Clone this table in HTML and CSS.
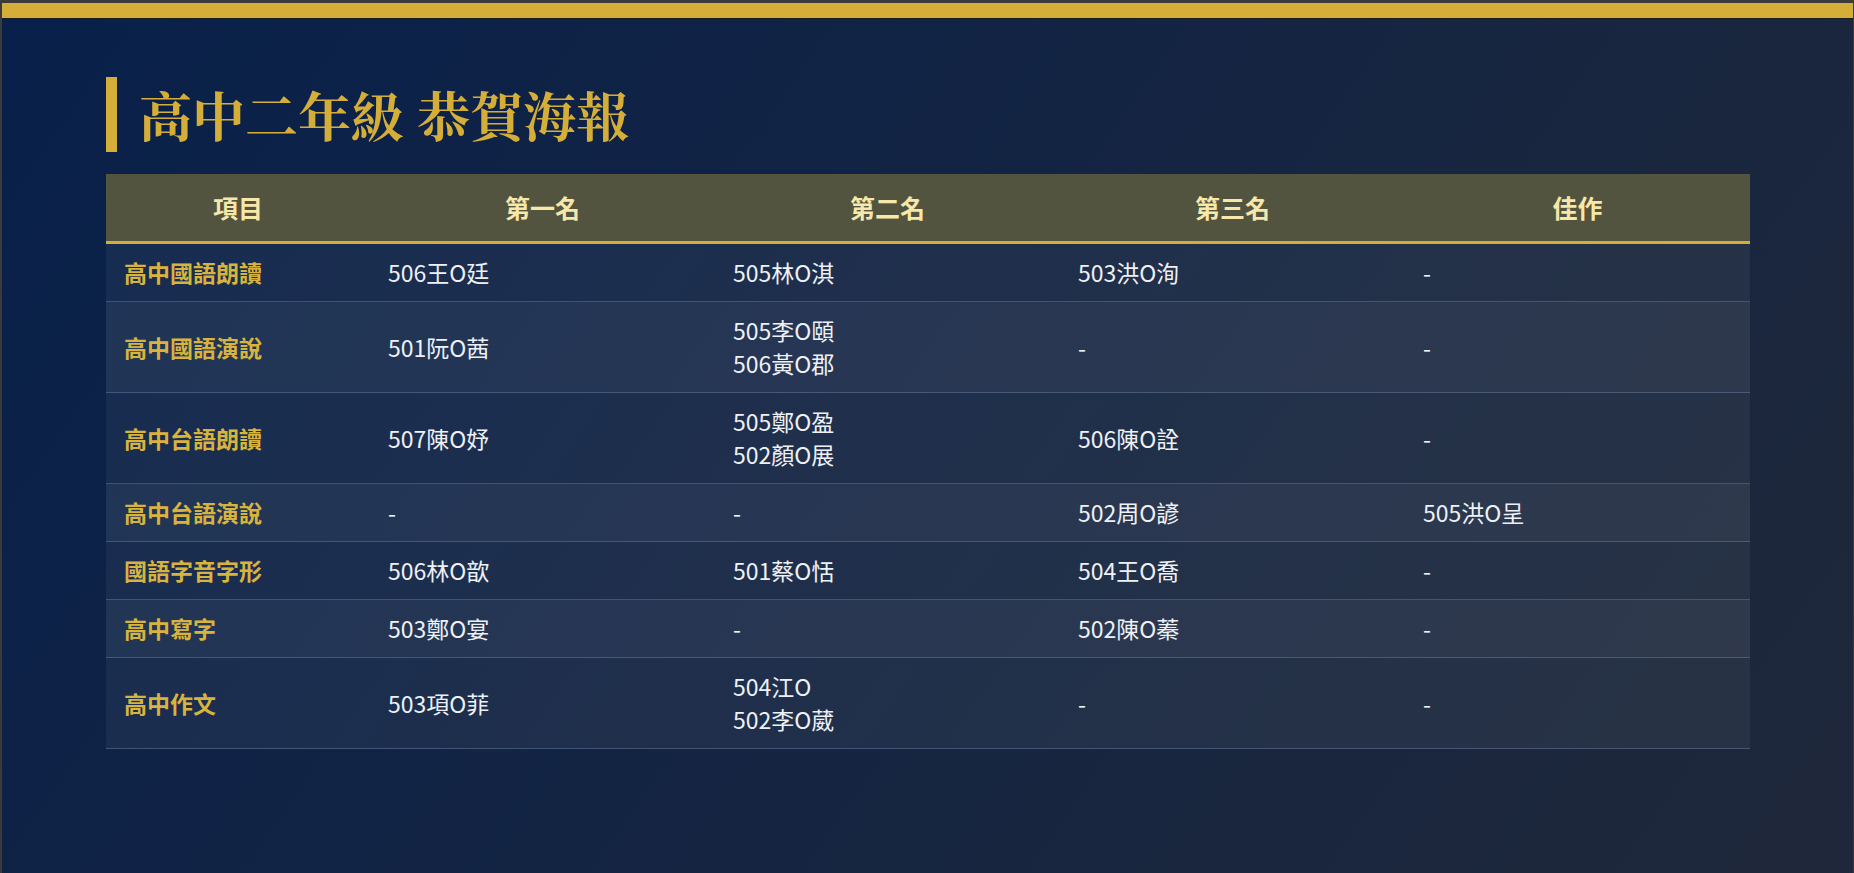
FILE: index.html
```html
<!DOCTYPE html>
<html lang="zh-Hant">
<head>
<meta charset="utf-8">
<title>高中二年級 恭賀海報</title>
<link rel="stylesheet" href="styles.css">
</head>
<body>
<div class="page">
  <div class="topbar"></div>
  <main class="content">
    <h1 class="title">高中二年級 恭賀海報</h1>
    <table class="awards">
      <colgroup>
        <col class="col-item">
        <col class="col-rank">
        <col class="col-rank">
        <col class="col-rank">
        <col class="col-rank">
      </colgroup>
      <thead>
        <tr><th>項目</th><th>第一名</th><th>第二名</th><th>第三名</th><th>佳作</th></tr>
      </thead>
      <tbody>
        <tr><td class="item">高中國語朗讀</td><td>506王O廷</td><td>505林O淇</td><td>503洪O洵</td><td>-</td></tr>
        <tr><td class="item">高中國語演說</td><td>501阮O茜</td><td>505李O頤<br>506黃O郡</td><td>-</td><td>-</td></tr>
        <tr><td class="item">高中台語朗讀</td><td>507陳O妤</td><td>505鄭O盈<br>502顏O展</td><td>506陳O詮</td><td>-</td></tr>
        <tr><td class="item">高中台語演說</td><td>-</td><td>-</td><td>502周O諺</td><td>505洪O呈</td></tr>
        <tr><td class="item">國語字音字形</td><td>506林O歆</td><td>501蔡O恬</td><td>504王O喬</td><td>-</td></tr>
        <tr><td class="item">高中寫字</td><td>503鄭O宴</td><td>-</td><td>502陳O蓁</td><td>-</td></tr>
        <tr><td class="item">高中作文</td><td>503項O菲</td><td>504江O<br>502李O葳</td><td>-</td><td>-</td></tr>
      </tbody>
    </table>
  </main>
</div>
</body>
</html>
```

FILE: styles.css
```css
html, body {
  margin: 0;
  padding: 0;
  height: 100%;
}

body {
  background: #3b3b39;
  font-family: "Noto Sans CJK TC", "Noto Sans", sans-serif;
}

.page {
  margin: 3px 1px 0 2px;
  height: calc(100% - 3px);
  background: linear-gradient(125deg, #08204a 0%, #132443 45%, #1f283a 100%);
  display: flex;
  flex-direction: column;
}

.topbar {
  height: 15px;
  background: #d4ae38;
  border-bottom: 1px solid #1a1d22;
  flex: none;
}

.content {
  padding: 58px 0 0 104px;
}

.title {
  margin: 0;
  height: 75px;
  border-left: 11px solid #d4ae38;
  padding-left: 22px;
  font-family: "Noto Serif CJK TC", "Noto Serif CJK SC", "Noto Serif TC", "AR PL UMing TW", serif;
  font-weight: 700;
  font-size: 53px;
  line-height: 75px;
  color: #d4ae38;
  letter-spacing: 0;
}

.awards {
  margin-top: 22px;
  width: 1644px;
  border-collapse: collapse;
  table-layout: fixed;
}

.col-item { width: 264px; }
.col-rank { width: 345px; }

.awards thead th {
  background: #52543f;
  color: #f7e7a8;
  font-size: 25px;
  font-weight: 700;
  line-height: 33px;
  padding: 17px 18px;
  text-align: center;
  border-bottom: 3px solid #d4ae38;
}

.awards tbody td {
  font-size: 23px;
  line-height: 33px;
  padding: 12px 18px;
  color: #eef1f5;
  vertical-align: middle;
  background: rgba(255, 255, 255, 0.05);
  border-bottom: 1px solid rgba(130, 155, 195, 0.35);
}

.awards tbody tr:nth-child(even) td {
  background: rgba(255, 255, 255, 0.085);
}

.awards tbody td.item {
  color: #d8b33d;
  font-weight: 700;
}
```
